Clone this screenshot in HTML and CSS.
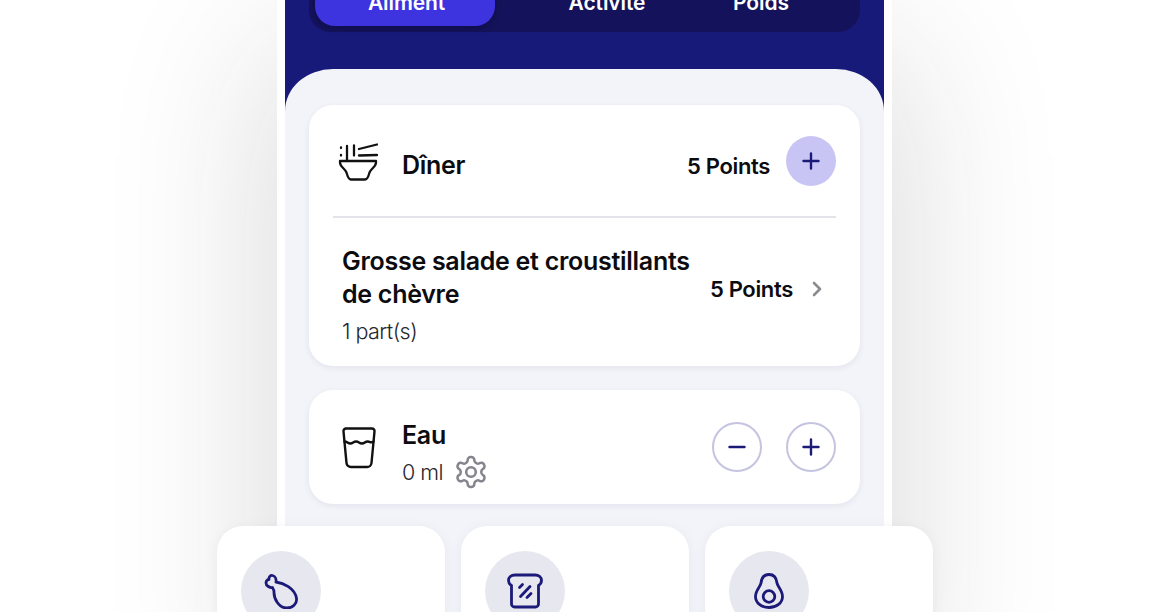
FILE: index.html
```html
<!DOCTYPE html>
<html lang="fr">
<head>
<meta charset="utf-8">
<title>Journal</title>
<link rel="stylesheet" href="styles.css">
</head>
<body>
<div class="stage">
  <div class="phone">
    <div class="screen">
    <header class="header">
      <nav class="tabs">
        <span class="tab tab-active">Aliment</span>
        <span class="tab tab-middle">Activité</span>
        <span class="tab tab-last">Poids</span>
      </nav>
    </header>
    <main class="sheet">
      <section class="card card-meal">
        <div class="meal-head">
          <svg class="meal-icon" viewBox="0 0 40 40" fill="none" stroke="#111" stroke-width="2.300" stroke-linecap="round" stroke-linejoin="round">
            <path d="M3 6.500v.5M3 14v.5M9 5v15M16 4.500v10M21 8l18-4.500M21 14.500l18-.5"/>
            <path d="M2 20h36v1.500c0 4.500-5 6-6.500 10-.8 2.500-1.500 7-4.500 7H13c-3 0-3.700-4.500-4.500-7C7 27.500 2 26 2 21.500z"/>
          </svg>
          <h2 class="name">Dîner</h2>
          <span class="points">5 Points</span>
          <button class="round round-fill" aria-label="Ajouter">
            <svg viewBox="0 0 24 24" class="glyph"><path d="M12 4.500v15M4.500 12h15"/></svg>
          </button>
        </div>
        <div class="meal-item">
          <div class="item-text">
            <div class="item-title">Grosse salade et croustillants de chèvre</div>
            <div class="sub">1 part(s)</div>
          </div>
          <span class="points">5 Points</span>
          <svg class="chevron" viewBox="0 0 12 18" fill="none" stroke="#8b8b90" stroke-width="2.600" stroke-linecap="round" stroke-linejoin="round"><path d="M3 3l6 6-6 6"/></svg>
        </div>
      </section>
      <section class="card card-water">
        <svg class="water-icon" viewBox="0 0 34 42" fill="none" stroke="#111" stroke-width="2.400" stroke-linecap="round" stroke-linejoin="round">
          <path d="M4 1.500h26a2.500 2.500 0 0 1 2.500 2.800L29.500 36a4.500 4.500 0 0 1-4.500 4H9a4.500 4.500 0 0 1-4.500-4L1.500 4.300A2.500 2.500 0 0 1 4 1.500z"/>
          <path d="M2.500 14.500c3 0 3 2 5.800 2s2.900-2 5.800-2 2.900 2 5.800 2 2.900-2 5.800-2 2.900 2 5.800 0"/>
        </svg>
        <div class="water-text">
          <h2 class="name">Eau</h2>
          <div class="water-sub">
            <span class="sub">0 ml</span>
            <svg class="gear" viewBox="0 0 24 24" fill="none" stroke="#85858d" stroke-width="1.700" stroke-linecap="round" stroke-linejoin="round">
              <path d="M12.220 2h-.44a2 2 0 0 0-2 2v.18a2 2 0 0 1-1 1.730l-.43.25a2 2 0 0 1-2 0l-.15-.08a2 2 0 0 0-2.730.73l-.22.38a2 2 0 0 0 .73 2.730l.15.1a2 2 0 0 1 1 1.720v.51a2 2 0 0 1-1 1.740l-.15.09a2 2 0 0 0-.73 2.730l.22.38a2 2 0 0 0 2.730.73l.15-.08a2 2 0 0 1 2 0l.43.25a2 2 0 0 1 1 1.730V20a2 2 0 0 0 2 2h.44a2 2 0 0 0 2-2v-.18a2 2 0 0 1 1-1.730l.43-.25a2 2 0 0 1 2 0l.15.08a2 2 0 0 0 2.730-.73l.22-.39a2 2 0 0 0-.73-2.730l-.15-.08a2 2 0 0 1-1-1.740v-.5a2 2 0 0 1 1-1.740l.15-.09a2 2 0 0 0 .73-2.730l-.22-.38a2 2 0 0 0-2.730-.73l-.15.08a2 2 0 0 1-2 0l-.43-.25a2 2 0 0 1-1-1.730V4a2 2 0 0 0-2-2z"/>
              <circle cx="12" cy="12" r="3.200"/>
            </svg>
          </div>
        </div>
        <div class="water-actions">
          <button class="round round-line" aria-label="Retirer">
            <svg viewBox="0 0 24 24" class="glyph"><path d="M4.500 12h15"/></svg>
          </button>
          <button class="round round-line" aria-label="Ajouter">
            <svg viewBox="0 0 24 24" class="glyph"><path d="M12 4.500v15M4.500 12h15"/></svg>
          </button>
        </div>
      </section>
    </main>
    </div>
  </div>
  <div class="food-row">
    <div class="food-card">
      <div class="food-circle">
        <svg class="food-icon" viewBox="0 0 36 36" fill="none" stroke="#1b1a78" stroke-width="2.800" stroke-linecap="round" stroke-linejoin="round">
          <path d="M13 9c7 1 19 6 20.500 16.500.7 5.500-4 9.500-9.500 9.500-8 0-13.500-9-13-17l-1.500-3.500C7 15 3 13 3 10c0-2 1.500-3.500 3-3.500C5.500 4 7.500 2 9.500 2.500 12 3 13.500 6 13 9z"/>
        </svg>
      </div>
    </div>
    <div class="food-card">
      <div class="food-circle">
        <svg class="food-icon" viewBox="0 0 36 36" fill="none" stroke="#1b1a78" stroke-width="2.800" stroke-linecap="round" stroke-linejoin="round">
          <path d="M8 2h20c4 0 6.500 2.500 6.500 5.500 0 2.500-1.500 4-3 5V31a3 3 0 0 1-3 3H7.500a3 3 0 0 1-3-3V12.500c-1.500-1-3-2.500-3-5C1.500 4.500 4 2 8 2z"/>
          <path d="M12.500 14.500l3-3M13.500 23.500l9.500-10M20 24.500l4-4"/>
        </svg>
      </div>
    </div>
    <div class="food-card">
      <div class="food-circle">
        <svg class="food-icon" viewBox="0 0 36 36" fill="none" stroke="#1b1a78" stroke-width="2.800" stroke-linecap="round" stroke-linejoin="round">
          <path d="M18 1.500c5 0 7.500 4 8 8.500.4 3.500 5.500 7 5.500 13.500 0 6.500-6 11-13.500 11S4.500 30 4.500 23.500c0-6.500 5.100-10 5.500-13.500C10.500 5.500 13 1.500 18 1.500z"/>
          <circle cx="18" cy="23.500" r="5.800"/>
        </svg>
      </div>
    </div>
  </div>
</div>
</body>
</html>
```
FILE: styles.css
```css
* { box-sizing: border-box; }
html, body { margin: 0; padding: 0; background: #fff; }
body { font-family: Inter, "Liberation Sans", sans-serif; color: #0c0c10; }

.stage {
  position: relative;
  width: 1169px;
  height: 612px;
  overflow: hidden;
  background: #fff;
}
.phone {
  width: 615px;
  height: 660px;
  margin: 0 auto;
  padding: 0 8px;
  background: #fff;
  box-shadow: 0 60px 150px 10px rgba(30, 30, 40, 0.16);
}
.screen { height: 660px; background: #171a78; }
.header {
  display: flow-root;
  height: 69px;
  padding: 0 24px;
}
.tabs {
  display: flex;
  align-items: center;
  height: 56px;
  margin-top: -24px;
  padding: 0 6px;
  background: #14125a;
  border-radius: 0 0 22px 22px;
}
.tab {
  flex: none;
  height: 44px;
  line-height: 41px;
  text-align: center;
  color: #fff;
  font-size: 21px;
  font-weight: 600;
  letter-spacing: -0.1px;
}
.tab-active {
  width: 180px;
  padding-left: 3px;
  background: #3d34e0;
  border-radius: 20px;
  box-shadow: 0 2px 6px rgba(8, 8, 50, 0.35);
}
.tab-middle { width: 224px; }
.tab-last { width: 84px; }
.sheet {
  height: 591px;
  padding: 36px 24px 0;
  background: #f3f4f9;
  border-radius: 48px 48px 0 0 / 42px 42px 0 0;
}
.card {
  background: #fff;
  border-radius: 24px;
  box-shadow: 0 2px 6px rgba(30, 30, 80, 0.07);
}
.card-meal { height: 261px; padding: 0 24px; }
.meal-head {
  display: flex;
  align-items: center;
  height: 113px;
  border-bottom: 2px solid #e3e3ec;
}
.meal-icon { width: 40px; height: 40px; margin: 0 24px 0 5px; flex: none; }
.name { margin: 0; font-size: 25px; font-weight: 600; letter-spacing: -0.3px; line-height: 30px; }
.points { font-size: 22px; font-weight: 600; letter-spacing: -0.35px; white-space: nowrap; }
.meal-head .name { flex: 1; margin-top: 9px; }
.meal-head .points { margin: 11px 16px 0 0; }
.round {
  width: 50px;
  height: 50px;
  padding: 0;
  border-radius: 50%;
  display: flex;
  align-items: center;
  justify-content: center;
  flex: none;
}
.round-fill { background: #c8c5f5; border: 0; }
.round-line { background: #fff; border: 2px solid #c5c4e0; }
.glyph { width: 24px; height: 24px; fill: none; stroke: #1b1a78; stroke-width: 2.400; stroke-linecap: round; }
.meal-item {
  display: flex;
  align-items: center;
  padding: 27px 0 0 9px;
}
.item-text { width: 368px; flex: none; }
.item-title { font-size: 25px; font-weight: 600; letter-spacing: -0.28px; line-height: 33px; }
.sub { font-size: 21.500px; font-weight: 300; letter-spacing: -0.55px; color: #26262c; }
.item-text .sub { display: block; margin-top: 5px; line-height: 30px; }
.meal-item .points { margin-top: -13px; }
.chevron { width: 12px; height: 18px; margin: -14px 0 0 18px; flex: none; }
.card-water {
  display: flex;
  align-items: center;
  height: 114px;
  margin-top: 24px;
  padding: 0 24px 0 33px;
}
.water-icon { width: 34px; height: 42px; margin: 1px 26px 0 0; flex: none; }
.water-text { flex: 1; padding-top: 16px; }
.water-sub { display: flex; align-items: center; gap: 10px; margin-top: 4px; }
.gear { width: 36px; height: 36px; flex: none; }
.water-actions { display: flex; gap: 24px; }
.food-row {
  position: absolute;
  left: 217px;
  top: 526px;
  display: flex;
  gap: 16px;
}
.food-card {
  width: 228px;
  height: 150px;
  padding: 25px 24px;
  background: #fff;
  border-radius: 26px;
  box-shadow: 0 2px 14px rgba(30, 30, 80, 0.05);
}
.food-circle {
  width: 80px;
  height: 80px;
  border-radius: 50%;
  background: #e7e7f0;
  display: flex;
  align-items: center;
  justify-content: center;
}
.food-icon { width: 36px; height: 36px; }
```
